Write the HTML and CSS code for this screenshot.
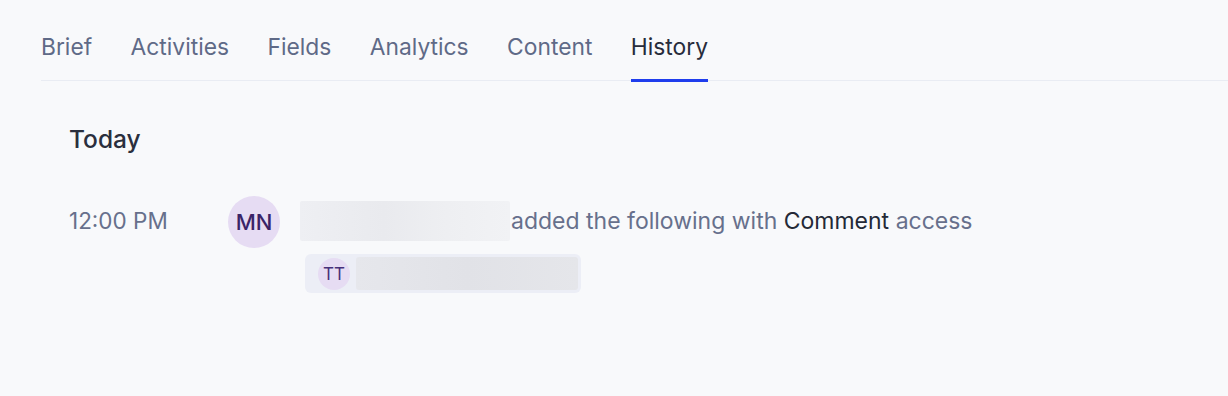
FILE: index.html
```html
<!DOCTYPE html>
<html>
<head>
<meta charset="utf-8">
<link rel="stylesheet" href="styles.css">
</head>
<body>
<div class="page">
  <nav class="tabs">
    <div class="tab">Brief</div>
    <div class="tab">Activities</div>
    <div class="tab">Fields</div>
    <div class="tab">Analytics</div>
    <div class="tab">Content</div>
    <div class="tab active">History</div>
  </nav>
  <section class="history">
    <h2 class="day">Today</h2>
    <div class="entry">
      <div class="time">12:00 PM</div>
      <div class="avatar">MN</div>
      <div class="body">
        <div class="line">
          <span class="blur-name"></span>
          <span class="text">added the following with <span class="strong">Comment</span> access</span>
        </div>
        <div class="chip">
          <span class="avatar small">TT</span>
          <span class="blur-chip"></span>
        </div>
      </div>
    </div>
  </section>
</div>
</body>
</html>
```
FILE: styles.css
```css
html, body {
  margin: 0;
  padding: 0;
  background: #f8f9fb;
}
body {
  font-family: Inter, "Noto Sans", sans-serif;
  width: 1228px;
  height: 396px;
  overflow: hidden;
}
.page {
  padding: 24px 0 0 41px;
}
.tabs {
  display: flex;
  gap: 38.5px;
  border-bottom: 1px solid #e9ecf3;
  height: 56px;
}
.tab {
  font-size: 22.8px;
  line-height: 46px;
  color: #5f6a87;
  position: relative;
}
.tab.active {
  color: #272c3b;
}
.tab.active::after {
  content: "";
  position: absolute;
  left: 0;
  right: 0;
  bottom: -2px;
  height: 3px;
  background: #1f3ded;
}
.history {
  padding: 42px 0 0 28px;
}
.day {
  margin: 0;
  font-size: 24.5px;
  font-weight: 500;
  color: #2a2f3d;
  line-height: 32px;
}
.entry {
  display: flex;
  align-items: flex-start;
  margin-top: 41px;
}
.time {
  width: 159px;
  font-size: 22.5px;
  line-height: 50px;
  color: #67708c;
}
.avatar {
  width: 52px;
  height: 52px;
  border-radius: 50%;
  background: #e6dcf3;
  color: #3a2468;
  font-size: 22px;
  font-weight: 500;
  display: flex;
  align-items: center;
  justify-content: center;
  flex-shrink: 0;
}
.body {
  margin-left: 20px;
}
.line {
  display: flex;
  align-items: center;
  height: 50px;
}
.blur-name {
  display: block;
  width: 210px;
  height: 40px;
  background: linear-gradient(90deg, #eeeff3 0%, #e9eaee 40%, #eeeff2 70%, #f1f2f5 100%);
  border-radius: 2px;
}
.text {
  margin-left: 1px;
  font-size: 23px;
  color: #67708c;
}
.strong {
  color: #242937;
}
.chip {
  display: flex;
  align-items: center;
  margin-left: 5px;
  margin-top: 8px;
  width: 276px;
  height: 39px;
  box-sizing: border-box;
  padding: 0 3px 0 13px;
  background: #eceef6;
  border-radius: 6px;
}
.avatar.small {
  width: 32px;
  height: 32px;
  font-size: 17px;
  font-weight: 400;
  color: #46307a;
}
.blur-chip {
  display: block;
  margin-left: 6px;
  flex: 1;
  height: 33px;
  background: linear-gradient(90deg, #e6e7ec 0%, #e1e2e7 50%, #e5e6ea 100%);
  border-radius: 3px;
}
```
